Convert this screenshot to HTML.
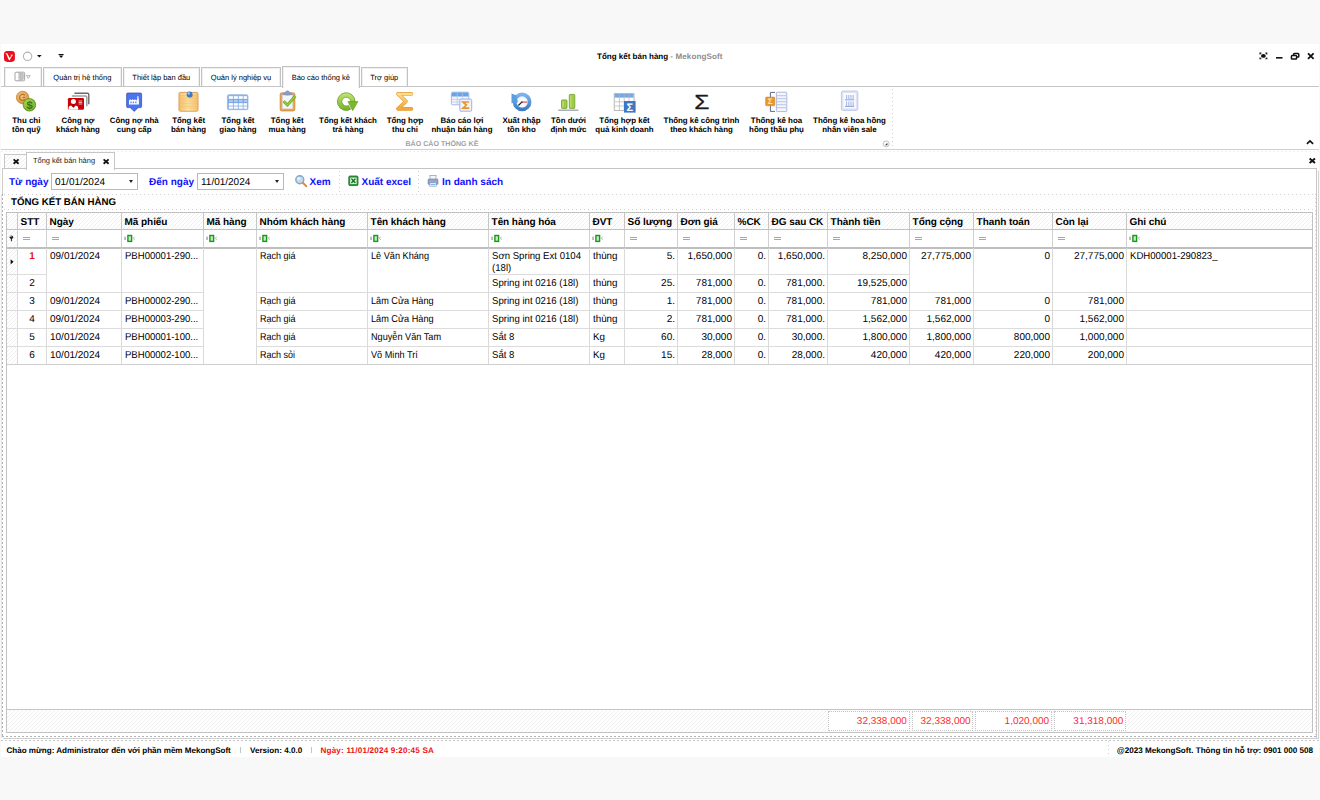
<!DOCTYPE html>
<html lang="vi"><head><meta charset="utf-8"><title>Tổng kết bán hàng - MekongSoft</title>
<style>
*{box-sizing:border-box;margin:0;padding:0}
html,body{width:1320px;height:800px;overflow:hidden;background:#f8f8f8;font-family:"Liberation Sans","DejaVu Sans",sans-serif;font-size:10px;color:#000;text-rendering:geometricPrecision}
.a{position:absolute}
.nw{white-space:nowrap}
#win{position:absolute;left:1px;top:44px;width:1318px;height:713px;background:#fff}
#title{position:absolute;left:597px;top:52px;font-size:8px;font-weight:bold;white-space:nowrap;line-height:10px}
#title span{color:#8c8c8c;letter-spacing:0.13px}
.rt{position:absolute;top:67.2px;height:19.8px;border:1px solid #c2c2c2;box-shadow:inset 1px 1px 0 #f0f0f0,inset -1px 0 0 #f0f0f0;border-bottom:none;background:#fff;font-size:7.5px;text-align:center;line-height:20.6px;white-space:nowrap;color:#000}
.rt.act{top:65.8px;height:22.2px;line-height:21.6px;z-index:3}
.hl{position:absolute;height:1px;background:#c9c9c9}
.vl{position:absolute;width:1px;background:#c9c9c9}
.rb{position:absolute;top:116px;text-align:center;font-weight:bold;font-size:7.9px;line-height:9px;white-space:nowrap;transform:translateX(-50%)}
.ic{position:absolute;z-index:4}
.hatch{background:repeating-linear-gradient(135deg,#fff 0,#fff 2.1px,#f0f0f0 2.2px,#f0f0f0 2.83px)}
.dth{position:absolute;height:1px;background:repeating-linear-gradient(90deg,#cfcfcf 0,#cfcfcf 1.5px,transparent 1.5px,transparent 4px)}
.dtv{position:absolute;width:1px;background:repeating-linear-gradient(180deg,#cfcfcf 0,#cfcfcf 1.5px,transparent 1.5px,transparent 4px)}
.blue{color:#1010ff;font-weight:bold;font-size:10px;white-space:nowrap;position:absolute;line-height:12px}
.dbox{position:absolute;top:173px;height:17px;border:1px solid #b9b9b9;background:#fff;font-size:10px;line-height:17px;padding-left:3px;white-space:nowrap}
.dbox i{position:absolute;right:4px;top:6px;width:0;height:0;border-left:2.5px solid transparent;border-right:2.5px solid transparent;border-top:3px solid #222}
.tot{position:absolute;top:711px;height:20px;border:1px dotted #c4c4c4;background:#fff;color:#ff2a2a;font-size:10px;line-height:20.6px;text-align:right;padding-right:1.6px}
.sb{position:absolute;top:745.7px;font-weight:bold;font-size:8.1px;line-height:10px;white-space:nowrap}
</style></head>
<body>
<div id="win"></div>
<svg class="ic" style="left:3.8px;top:50.8px" width="12" height="12" viewBox="0 0 12 12" ><rect x="0" y="0" width="10.9" height="10.9" rx="3.3" fill="#e8101c"/><path d="M1.3 2 L3.2 2.2 L5.7 7 L7.4 4.4 L6.6 4.2 L6.6 3.7 L9 3.7 L9 4.2 L8.3 4.4 L5.6 9.2 L5 9.2 L2.2 3 Z" fill="#fff"/></svg>
<svg class="ic" style="left:21px;top:50px" width="45" height="12" viewBox="0 0 45 12" ><circle cx="6.6" cy="6.3" r="4.2" fill="#fff" stroke="#b4b4b4" stroke-width="1.1"/><path d="M16 4.9 L20.6 4.9 L18.3 7.5 Z" fill="#111"/><path d="M37.6 4 H42.6 V4.9 H37.6 Z M37.8 5.6 L42.4 5.6 L40.1 8.1 Z" fill="#111"/></svg>
<div id="title">Tổng kết bán hàng <span>- MekongSoft</span></div>
<svg class="ic" style="left:1257px;top:50px" width="60" height="12" viewBox="0 0 60 12" ><g fill="none" stroke="#111" stroke-width="1.1"><path d="M3 4.4 V3.1 H4.4 M8.4 3.1 H9.8 V4.4 M9.8 7.4 V8.7 H8.4 M4.4 8.7 H3 V7.4"/></g><ellipse cx="6.4" cy="5.9" rx="2.4" ry="1.9" fill="#111"/><rect x="19" y="7" width="6.5" height="1.6" fill="#111"/><g fill="none" stroke="#111" stroke-width="1.5"><rect x="36.6" y="3.6" width="5.2" height="3.4" rx="0.8"/><rect x="34.4" y="5.6" width="5.2" height="3.4" rx="0.8" fill="#fff"/></g><path d="M51 3.4 L56.6 8.8 M56.6 3.4 L51 8.8" stroke="#111" stroke-width="1.8" fill="none"/></svg>
<div class="rt" style="left:3.5px;width:38.7px"></div>
<div class="rt" style="left:42.8px;width:79.1px">Quản trị hệ thống</div>
<div class="rt" style="left:122.6px;width:77.4px">Thiết lập ban đầu</div>
<div class="rt" style="left:200.8px;width:80.5px">Quản lý nghiệp vụ</div>
<div class="rt act" style="left:281.7px;width:78.3px">Báo cáo thống kê</div>
<div class="rt" style="left:360.5px;width:47.5px">Trợ giúp</div>
<svg class="ic" style="left:14px;top:71px" width="20" height="12" viewBox="0 0 20 12" ><rect x="1" y="1.2" width="9.6" height="8.6" rx="1" fill="#fff" stroke="#9a9a9a" stroke-width="0.9"/><rect x="6" y="2.6" width="3.2" height="5.8" fill="#c4c4c4" stroke="#9c9c9c" stroke-width="0.5"/><path d="M5 1.2 V9.8" stroke="#9a9a9a" stroke-width="0.8"/><path d="M12.4 4.6 L16.2 4.6 L14.3 7.4 Z" fill="#fff" stroke="#999" stroke-width="0.7"/></svg>
<div class="hl" style="left:1px;top:86px;width:1318px;background:#c6c6c6;height:1.3px"></div>
<div class="hl" style="left:1px;top:148.6px;width:1318px;background:#cfcfcf"></div>
<div class="dth" style="left:1px;top:151px;width:1318px;opacity:.3"></div>
<div class="rb" style="left:26.3px">Thu chi<br>tồn quỹ</div>
<div class="rb" style="left:78px">Công nợ<br>khách hàng</div>
<div class="rb" style="left:134.2px">Công nợ nhà<br>cung cấp</div>
<div class="rb" style="left:188.6px">Tổng kết<br>bán hàng</div>
<div class="rb" style="left:238px">Tổng kết<br>giao hàng</div>
<div class="rb" style="left:287.2px">Tổng kết<br>mua hàng</div>
<div class="rb" style="left:348px">Tổng kết khách<br>trả hàng</div>
<div class="rb" style="left:405px">Tổng hợp<br>thu chi</div>
<div class="rb" style="left:462px">Báo cáo lợi<br>nhuận bán hàng</div>
<div class="rb" style="left:521.5px">Xuất nhập<br>tồn kho</div>
<div class="rb" style="left:568.5px">Tồn dưới<br>định mức</div>
<div class="rb" style="left:624.5px">Tổng hợp kết<br>quả kinh doanh</div>
<div class="rb" style="left:701.5px">Thống kê công trình<br>theo khách hàng</div>
<div class="rb" style="left:776.5px">Thống kê hoa<br>hồng thầu phụ</div>
<div class="rb" style="left:849.5px">Thống kê hoa hồng<br>nhân viên sale</div>
<div class="a nw" style="left:405.5px;top:140px;font-size:7.1px;font-weight:bold;color:#a2a2a2;line-height:9px">BÁO CÁO THỐNG KÊ</div>
<div class="dtv" style="left:892px;top:89px;height:60px;"></div>
<svg class="ic" style="left:882px;top:140px" width="8" height="8" viewBox="0 0 8 8" ><circle cx="4.2" cy="3.9" r="3" fill="#fff" stroke="#999" stroke-width="0.6"/><path d="M5.4 2.8 L5.4 5.2 L3 5.2 Z" fill="#333"/></svg>
<svg class="ic" style="left:1305px;top:138px" width="10" height="8" viewBox="0 0 10 8" ><path d="M1.9 5.8 L5 2.9 L8.1 5.8" fill="none" stroke="#111" stroke-width="1.7"/></svg>
<svg class="ic" style="left:1308px;top:156px" width="9" height="9" viewBox="0 0 9 9" ><path d="M1.6 2.5 L7 7 M7 2.5 L1.6 7" stroke="#111" stroke-width="1.9" fill="none"/></svg>
<svg width="0" height="0" style="position:absolute"><defs><radialGradient id="gOr" cx="40%" cy="35%" r="70%"><stop offset="0" stop-color="#f8d098"/><stop offset="1" stop-color="#d08428"/></radialGradient><radialGradient id="gGr" cx="40%" cy="35%" r="70%"><stop offset="0" stop-color="#b4dc5a"/><stop offset="1" stop-color="#5c9a1c"/></radialGradient><linearGradient id="gSig" x1="0" y1="0" x2="0" y2="1"><stop offset="0" stop-color="#fde08c"/><stop offset="1" stop-color="#f0a838"/></linearGradient><linearGradient id="gNote" x1="0" y1="0" x2="1" y2="0"><stop offset="0" stop-color="#f5c474"/><stop offset="0.5" stop-color="#fdeaae"/><stop offset="1" stop-color="#f5c474"/></linearGradient><linearGradient id="gGrn" x1="0" y1="0" x2="0" y2="1"><stop offset="0" stop-color="#c4e674"/><stop offset="1" stop-color="#74b024"/></linearGradient><linearGradient id="gBlu" x1="0" y1="0" x2="0" y2="1"><stop offset="0" stop-color="#7cb4ec"/><stop offset="1" stop-color="#3c7cc8"/></linearGradient></defs></svg>
<svg class="ic" style="left:15px;top:90px" width="23" height="23" viewBox="0 0 23 23" ><circle cx="7.6" cy="7.5" r="6.2" fill="url(#gOr)" stroke="#cc8c3c" stroke-width="0.9"/><circle cx="7.6" cy="7.5" r="4.3" fill="none" stroke="#e8b068" stroke-width="0.7"/><path d="M9.8 5.4 A3 3 0 1 0 9.9 9.4 M7.6 7.4 H10" fill="none" stroke="#b87428" stroke-width="1.3"/><circle cx="14.4" cy="14.8" r="6.3" fill="url(#gGr)" stroke="#5a941c" stroke-width="0.8"/><circle cx="14.4" cy="14.8" r="4.9" fill="none" stroke="#a4d458" stroke-width="0.6"/><text x="14.5" y="18.7" font-family="Liberation Sans,sans-serif" font-weight="bold" font-size="11" text-anchor="middle" fill="#3a7410">$</text></svg>
<svg class="ic" style="left:66px;top:91px" width="25" height="21" viewBox="0 0 25 21" ><path d="M8.4 2.2 H21.6 Q22.8 2.2 22.8 3.4 V13.2" fill="none" stroke="#6a6a6a" stroke-width="1.4"/><path d="M5.8 4.9 H19.4 Q20.8 4.9 20.8 6.2 V15.2" fill="none" stroke="#9aa2a2" stroke-width="1.5"/><rect x="1.9" y="6.9" width="16.1" height="11.9" rx="1.3" fill="#c80008"/><circle cx="7.4" cy="10.5" r="2.5" fill="#fff"/><path d="M2.6 18.8 V16.8 Q2.6 14.6 5 14.4 L7.4 16.8 L9.8 14.4 Q12.2 14.6 12.2 16.8 V18.8 Z" fill="#fff"/><path d="M6.9 13 H7.9 L8.1 15.6 L7.4 16.6 L6.7 15.6 Z" fill="#701818"/><path d="M12.6 10 H16.2 M12.6 11.5 H16.2 M12.6 13 H16.2" stroke="#f8d8d8" stroke-width="0.8"/></svg>
<svg class="ic" style="left:125px;top:92px" width="19" height="20" viewBox="0 0 19 20" ><path d="M2.8 1 H15.4 Q16.6 1 16.6 2.2 V14.4 Q16.6 15.6 15.4 15.6 H13.2 L9.2 19.4 L5.2 15.6 H2.8 Q1.6 15.6 1.6 14.4 V2.2 Q1.6 1 2.8 1 Z" fill="#4c74f0" stroke="#34489c" stroke-width="0.7"/><path d="M4 12.6 V8.4 L5.2 7.2 L6.4 8.2 L7.6 7.2 L8.8 8.2 L10 7.2 L11.2 8.2 H12 L12.5 4 H13.3 L13.9 8.2 V12.6 Z" fill="#fff"/><path d="M5.3 9.6 H6.7 V11.3 H5.3 Z M7.7 9.6 H9.1 V11.3 H7.7 Z M10.1 9.6 H11.5 V11.3 H10.1 Z" fill="#6c8cf0"/></svg>
<svg class="ic" style="left:177px;top:90px" width="23" height="23" viewBox="0 0 23 23" ><rect x="2" y="2.4" width="19" height="18.8" rx="1.2" fill="url(#gNote)" stroke="#dc9c58" stroke-width="1"/><path d="M3 5.4 H20 M3 7 H20 M3 8.6 H20 M3 10.2 H20 M3 11.8 H20 M3 13.4 H20 M3 15 H20 M3 16.6 H20 M3 18.2 H20" stroke="#f0b25c" stroke-width="0.5"/><ellipse cx="13.4" cy="6.2" rx="2.6" ry="1.6" fill="#c89040" opacity=".45"/><circle cx="12.6" cy="4.4" r="3" fill="#3a78c4"/><circle cx="11.8" cy="3.4" r="1.2" fill="#a4c8f0"/></svg>
<svg class="ic" style="left:226px;top:93px" width="24" height="18" viewBox="0 0 24 18" ><rect x="1.4" y="1.7" width="20.6" height="15" rx="1.6" fill="#8cb2e8" stroke="#94b6e6" stroke-width="0.8"/><rect x="2.2" y="6.2" width="19" height="3.6" fill="#6c9ce0"/><rect x="2.9" y="3.2" width="4" height="2.6" fill="#fff"/><rect x="7.8" y="3.2" width="4" height="2.6" fill="#fff"/><rect x="12.7" y="3.2" width="4" height="2.6" fill="#fff"/><rect x="17.6" y="3.2" width="3.4" height="2.6" fill="#fff"/><rect x="2.9" y="6.7" width="4" height="2.6" fill="#a8c8f0"/><rect x="7.8" y="6.7" width="4" height="2.6" fill="#a8c8f0"/><rect x="12.7" y="6.7" width="4" height="2.6" fill="#a8c8f0"/><rect x="17.6" y="6.7" width="3.4" height="2.6" fill="#a8c8f0"/><rect x="2.9" y="10.2" width="4" height="2.4" fill="#fff"/><rect x="7.8" y="10.2" width="4" height="2.4" fill="#fff"/><rect x="12.7" y="10.2" width="4" height="2.4" fill="#fff"/><rect x="17.6" y="10.2" width="3.4" height="2.4" fill="#fff"/><rect x="2.9" y="13.5" width="4" height="2.2" fill="#fff"/><rect x="7.8" y="13.5" width="4" height="2.2" fill="#fff"/><rect x="12.7" y="13.5" width="4" height="2.2" fill="#fff"/><rect x="17.6" y="13.5" width="3.4" height="2.2" fill="#fff"/></svg>
<svg class="ic" style="left:278px;top:90px" width="20" height="23" viewBox="0 0 20 23" ><rect x="2.2" y="2.9" width="14.6" height="18" rx="1.4" fill="#eaa850" stroke="#d08a34" stroke-width="0.9"/><rect x="4.4" y="4.4" width="10.2" height="14.4" fill="#f2f5fb" stroke="#d0d6e4" stroke-width="0.4"/><path d="M4.6 4.6 Q4.8 2.6 7.2 2.4 Q8 0.8 9.5 0.8 Q11 0.8 11.8 2.4 Q14.2 2.6 14.4 4.6 Q9.5 5.8 4.6 4.6 Z" fill="#8c9cc0" stroke="#7484ac" stroke-width="0.5"/><path d="M5.6 11.2 L9.4 15 L17.4 6" fill="none" stroke="#68a422" stroke-width="2.7" stroke-linejoin="miter"/><path d="M5.6 11.2 L9.4 15 L17.4 6" fill="none" stroke="#94d03c" stroke-width="1.5" stroke-linejoin="miter"/></svg>
<svg class="ic" style="left:336px;top:91px" width="24" height="21" viewBox="0 0 24 21" ><path d="M19.05 10.6 A8.85 8.85 0 1 0 14.6 18.26 L12.4 14.4 A4.4 4.4 0 1 1 14.6 10.6 Z" fill="url(#gGrn)" stroke="#5e9a1e" stroke-width="0.7"/><path d="M11.9 10.6 H21.9 L16.7 19.7 Z" fill="#7cb82c" stroke="#5e9a1e" stroke-width="0.6"/></svg>
<svg class="ic" style="left:395px;top:91px" width="20" height="21" viewBox="0 0 20 21" ><path d="M16.5 2.9 H2.9 L11 10.4 L2.9 17.9 H16.5" fill="none" stroke="#e49a3a" stroke-width="3.6" stroke-linejoin="round" stroke-linecap="round"/><path d="M16.5 2.9 H2.9 L11 10.4 L2.9 17.9 H16.5" fill="none" stroke="url(#gSig)" stroke-width="2.5" stroke-linejoin="round" stroke-linecap="round"/></svg>
<svg class="ic" style="left:450px;top:91px" width="24" height="22" viewBox="0 0 24 22" ><rect x="1.4" y="1.2" width="17.4" height="12.6" rx="1.2" fill="#f2f5fc" stroke="#90a8dc" stroke-width="0.8"/><path d="M1.8 2.4 Q1.8 1.6 2.6 1.6 H17.6 Q18.4 1.6 18.4 2.4 V5.6 H1.8 Z" fill="#68a4e4"/><path d="M1.8 8.4 H18.4 M1.8 11 H18.4 M7.2 1.8 V13.4 M12.6 1.8 V13.4" stroke="#b4c4e8" stroke-width="0.7"/><rect x="9.8" y="8.1" width="11.9" height="12.1" rx="1.2" fill="#eef2fb" stroke="#a4b0dc" stroke-width="1"/><path d="M19.2 11 H13 L16.4 14.1 L13 17.2 H19.2" fill="none" stroke="#e8962c" stroke-width="1.7" stroke-linejoin="miter"/></svg>
<svg class="ic" style="left:510px;top:91px" width="24" height="22" viewBox="0 0 24 22" ><circle cx="12.1" cy="10.9" r="7.5" fill="#f0f5fb" stroke="url(#gBlu)" stroke-width="3.7"/><path d="M1.5 2.4 V12.3 L10.6 11.6 Q5 9 6.6 4.6 Z" fill="#5a9ee0"/><circle cx="12.1" cy="11.6" r="4.6" fill="#f6f9fd"/><path d="M11.8 11.1 L8.4 14.5" stroke="#222" stroke-width="1.2"/><path d="M12.4 11.1 H17.2" stroke="#d04040" stroke-width="1.1"/><circle cx="11.9" cy="11.1" r="0.9" fill="#333"/></svg>
<svg class="ic" style="left:557px;top:92px" width="23" height="20" viewBox="0 0 23 20" ><rect x="4.5" y="7.9" width="5.5" height="8.5" rx="0.7" fill="#a0cc48" stroke="#6e9e2a" stroke-width="0.8"/><rect x="12.3" y="2.4" width="5.5" height="14" rx="0.7" fill="#a0cc48" stroke="#6e9e2a" stroke-width="0.8"/><path d="M6 9 V15.6 M13.8 3.6 V15.6" stroke="#b8dc68" stroke-width="1.4"/><rect x="1.2" y="17.7" width="20.2" height="0.9" fill="#74749a"/></svg>
<svg class="ic" style="left:613px;top:92px" width="24" height="22" viewBox="0 0 24 22" ><rect x="1.2" y="1.6" width="19.8" height="16.8" fill="#fff" stroke="#a8a8a8" stroke-width="0.8"/><rect x="1.6" y="2" width="19" height="3.6" fill="#78a8e4"/><path d="M1.6 9.8 H20.6 M1.6 14 H20.6 M6.4 2 V18 M11.2 2 V18 M16 2 V18" stroke="#b4b4b4" stroke-width="0.7"/><rect x="11" y="9" width="11.6" height="11.6" fill="#3c78c4"/><text x="16.8" y="18.6" font-family="Liberation Sans,sans-serif" font-weight="bold" font-size="11" text-anchor="middle" fill="#fff">Σ</text></svg>
<svg class="ic" style="left:693px;top:92px" width="18" height="19" viewBox="0 0 18 19" ><text x="0" y="16.7" font-family="Liberation Sans,sans-serif" font-size="20.4" text-anchor="middle" fill="#1a1a1a" stroke="#1a1a1a" stroke-width="0.3" transform="translate(8.7,0) scale(1.2,1)">Σ</text></svg>
<svg class="ic" style="left:764px;top:91px" width="25" height="22" viewBox="0 0 25 22" ><path d="M11 1.4 H6.4 V20.4 H11" fill="none" stroke="#4c587c" stroke-width="0.9"/><rect x="12.4" y="1.2" width="10.4" height="19.4" rx="0.8" fill="#f2f5fc" stroke="#9aa8d4" stroke-width="0.8"/><path d="M13 4.6 H22.2 M13 7.6 H22.2 M13 10.6 H22.2 M13 13.6 H22.2 M13 16.6 H22.2" stroke="#c4cee8" stroke-width="1.2"/><rect x="1.6" y="6" width="9.2" height="8.8" rx="0.8" fill="#e8962c" stroke="#d08020" stroke-width="0.5"/><text x="6.2" y="13.4" font-family="Liberation Sans,sans-serif" font-weight="bold" font-size="8" text-anchor="middle" fill="#fbe4b8">Σ</text></svg>
<svg class="ic" style="left:840px;top:90px" width="20" height="22" viewBox="0 0 20 22" ><rect x="1.4" y="1" width="16.4" height="19.4" rx="1.4" fill="#dfe3f4" stroke="#b8c0e4" stroke-width="0.8"/><rect x="3.4" y="3" width="12.4" height="15.4" fill="#fafbfe"/><path d="M5 9.8 H14.2 M5 16.4 H14.2" stroke="#6c8cd4" stroke-width="0.8"/><path d="M6.6 5 V9.4 M8.8 5 V9.4 M11 5 V9.4 M13.2 5 V9.4 M6.6 11.6 V16 M8.8 11.6 V16 M11 11.6 V16 M13.2 11.6 V16" stroke="#a4b8e8" stroke-width="1.1"/></svg>
<div class="a hatch" style="left:4px;top:154px;width:23px;height:15px;border:1px solid #c6c6c6;border-bottom:none"></div>
<svg class="ic" style="left:12px;top:157px" width="9" height="9" viewBox="0 0 9 9" ><path d="M1.6 2.4 L6.6 6.8 M6.6 2.4 L1.6 6.8" stroke="#111" stroke-width="1.8" fill="none"/></svg>
<div class="a" style="left:26px;top:152px;width:89px;height:18px;border:1px solid #c6c6c6;border-bottom:none;background:#fff;z-index:2"></div>
<div class="a nw" style="left:33px;top:156px;font-size:7.45px;line-height:10px;z-index:3;color:#222">Tổng kết bán hàng</div>
<svg class="ic" style="left:102px;top:157px" width="9" height="9" viewBox="0 0 9 9" ><path d="M1.6 2.4 L6.6 6.8 M6.6 2.4 L1.6 6.8" stroke="#111" stroke-width="1.8" fill="none"/></svg>
<div class="hl" style="left:2px;top:168px;width:1315px;background:#c4c4c4"></div>
<div class="vl" style="left:1.5px;top:168px;height:26px;background:#cccccc"></div>
<div class="vl" style="left:1px;top:194px;height:544px;background:#e4e4e4"></div>
<div class="a" style="left:1.8px;top:194px;width:1px;height:543px;background:repeating-linear-gradient(180deg,#b0b0b0 0,#b0b0b0 2.4px,transparent 2.4px,transparent 4px)"></div>
<div class="vl" style="left:1316.2px;top:168px;height:570px;background:#c6c6c6"></div>
<div class="vl" style="left:1318px;top:171px;height:567px;background:#d4d4d4"></div>
<div class="dtv" style="left:1315.2px;top:194px;height:542px"></div>
<div class="blue" style="left:9px;top:177.2px">Từ ngày</div>
<div class="dbox" style="left:51px;width:87px">01/01/2024<i></i></div>
<div class="blue" style="left:149px;top:177.2px">Đến ngày</div>
<div class="dbox" style="left:197px;width:87px">11/01/2024<i></i></div>
<svg class="ic" style="left:294px;top:174px" width="14" height="14" viewBox="0 0 14 14" ><circle cx="5.8" cy="5.8" r="4" fill="#bcdcf6" stroke="#8ca4c0" stroke-width="1.4"/><circle cx="4.8" cy="4.6" r="1.6" fill="#e4f2fc"/><path d="M8.8 8.8 L12.4 12.2" stroke="#d88c4c" stroke-width="1.9" stroke-linecap="round"/></svg>
<div class="blue" style="left:309.5px;top:177.2px">Xem</div>
<div class="dtv" style="left:339px;top:171px;height:21px"></div>
<svg class="ic" style="left:348px;top:175px" width="11" height="12" viewBox="0 0 11 12" ><rect x="0.8" y="1" width="9.2" height="9.6" rx="1.2" fill="#2c9c3c" stroke="#146c20" stroke-width="0.8"/><rect x="2.2" y="2.6" width="6.4" height="6.4" fill="#e4f4e4"/><path d="M3.4 3.6 L7.4 8 M7.4 3.6 L3.4 8" stroke="#0c6c1c" stroke-width="1.4"/></svg>
<div class="blue" style="left:361.5px;top:177.2px">Xuất excel</div>
<div class="dtv" style="left:418px;top:171px;height:21px"></div>
<svg class="ic" style="left:427px;top:174px" width="12" height="14" viewBox="0 0 12 14" ><rect x="3" y="1.4" width="6" height="4.4" fill="#f4f8fc" stroke="#8898b8" stroke-width="0.7"/><rect x="1" y="5" width="10" height="5.4" rx="1" fill="#94a6cc" stroke="#6c7ca4" stroke-width="0.6"/><rect x="2.8" y="8.6" width="6.4" height="3.6" fill="#e8f0fc" stroke="#7c90b8" stroke-width="0.6"/><path d="M3.6 10.4 H8.4" stroke="#58a0e0" stroke-width="0.8"/></svg>
<div class="blue" style="left:442px;top:177.2px">In danh sách</div>
<div class="a hatch" style="left:5px;top:194px;width:1310px;height:15px;opacity:.35"></div>
<div class="dth" style="left:4px;top:193.5px;width:1311px"></div>
<div class="dth" style="left:4px;top:208.5px;width:1311px"></div>
<div class="a nw" style="left:11px;top:196.8px;font-size:9.7px;font-weight:bold;line-height:12px">TỔNG KẾT BÁN HÀNG</div>
<div class="a" style="left:6px;top:212px;width:1307px;height:521px;border:1px solid #c2c2c2;background:#fff"></div>
<div class="a hatch" style="left:7px;top:213px;width:1305px;height:16px"></div>
<div class="a hatch" style="left:7px;top:248px;width:10px;height:116px"></div>
<div class="a hatch" style="left:7px;top:230px;width:10px;height:17px"></div>
<div class="a hatch" style="left:7px;top:710px;width:1305px;height:22px"></div>
<div class="hl" style="left:7px;top:709px;width:1305px;background:#c6c6c6"></div>
<div class="hl" style="left:7px;top:229px;width:1305px;background:#c2c2c2"></div>
<div class="hl" style="left:7px;top:247px;width:1305px;height:1.8px;background:#bebebe"></div>
<div class="vl" style="left:17px;top:213px;height:16px;background:#c6c6c6"></div>
<div class="vl" style="left:17px;top:230px;height:17px;background:#d0d0d0"></div>
<div class="vl" style="left:17px;top:248px;height:116px;background:#dadada"></div>
<div class="vl" style="left:46px;top:213px;height:16px;background:#c6c6c6"></div>
<div class="vl" style="left:46px;top:230px;height:17px;background:#d0d0d0"></div>
<div class="vl" style="left:46px;top:248px;height:116px;background:#dadada"></div>
<div class="vl" style="left:121px;top:213px;height:16px;background:#c6c6c6"></div>
<div class="vl" style="left:121px;top:230px;height:17px;background:#d0d0d0"></div>
<div class="vl" style="left:121px;top:248px;height:116px;background:#dadada"></div>
<div class="vl" style="left:203px;top:213px;height:16px;background:#c6c6c6"></div>
<div class="vl" style="left:203px;top:230px;height:17px;background:#d0d0d0"></div>
<div class="vl" style="left:203px;top:248px;height:116px;background:#dadada"></div>
<div class="vl" style="left:256px;top:213px;height:16px;background:#c6c6c6"></div>
<div class="vl" style="left:256px;top:230px;height:17px;background:#d0d0d0"></div>
<div class="vl" style="left:256px;top:248px;height:116px;background:#dadada"></div>
<div class="vl" style="left:367px;top:213px;height:16px;background:#c6c6c6"></div>
<div class="vl" style="left:367px;top:230px;height:17px;background:#d0d0d0"></div>
<div class="vl" style="left:367px;top:248px;height:116px;background:#dadada"></div>
<div class="vl" style="left:488px;top:213px;height:16px;background:#c6c6c6"></div>
<div class="vl" style="left:488px;top:230px;height:17px;background:#d0d0d0"></div>
<div class="vl" style="left:488px;top:248px;height:116px;background:#dadada"></div>
<div class="vl" style="left:589px;top:213px;height:16px;background:#c6c6c6"></div>
<div class="vl" style="left:589px;top:230px;height:17px;background:#d0d0d0"></div>
<div class="vl" style="left:589px;top:248px;height:116px;background:#dadada"></div>
<div class="vl" style="left:624px;top:213px;height:16px;background:#c6c6c6"></div>
<div class="vl" style="left:624px;top:230px;height:17px;background:#d0d0d0"></div>
<div class="vl" style="left:624px;top:248px;height:116px;background:#dadada"></div>
<div class="vl" style="left:677px;top:213px;height:16px;background:#c6c6c6"></div>
<div class="vl" style="left:677px;top:230px;height:17px;background:#d0d0d0"></div>
<div class="vl" style="left:677px;top:248px;height:116px;background:#dadada"></div>
<div class="vl" style="left:734px;top:213px;height:16px;background:#c6c6c6"></div>
<div class="vl" style="left:734px;top:230px;height:17px;background:#d0d0d0"></div>
<div class="vl" style="left:734px;top:248px;height:116px;background:#dadada"></div>
<div class="vl" style="left:768px;top:213px;height:16px;background:#c6c6c6"></div>
<div class="vl" style="left:768px;top:230px;height:17px;background:#d0d0d0"></div>
<div class="vl" style="left:768px;top:248px;height:116px;background:#dadada"></div>
<div class="vl" style="left:827px;top:213px;height:16px;background:#c6c6c6"></div>
<div class="vl" style="left:827px;top:230px;height:17px;background:#d0d0d0"></div>
<div class="vl" style="left:827px;top:248px;height:116px;background:#dadada"></div>
<div class="vl" style="left:909px;top:213px;height:16px;background:#c6c6c6"></div>
<div class="vl" style="left:909px;top:230px;height:17px;background:#d0d0d0"></div>
<div class="vl" style="left:909px;top:248px;height:116px;background:#dadada"></div>
<div class="vl" style="left:973px;top:213px;height:16px;background:#c6c6c6"></div>
<div class="vl" style="left:973px;top:230px;height:17px;background:#d0d0d0"></div>
<div class="vl" style="left:973px;top:248px;height:116px;background:#dadada"></div>
<div class="vl" style="left:1052px;top:213px;height:16px;background:#c6c6c6"></div>
<div class="vl" style="left:1052px;top:230px;height:17px;background:#d0d0d0"></div>
<div class="vl" style="left:1052px;top:248px;height:116px;background:#dadada"></div>
<div class="vl" style="left:1126px;top:213px;height:16px;background:#c6c6c6"></div>
<div class="vl" style="left:1126px;top:230px;height:17px;background:#d0d0d0"></div>
<div class="vl" style="left:1126px;top:248px;height:116px;background:#dadada"></div>
<div class="hl" style="left:7px;top:274.4px;width:39px;background:#dcdcdc"></div>
<div class="hl" style="left:489px;top:274.4px;width:420px;background:#dcdcdc"></div>
<div class="hl" style="left:7px;top:292px;width:196px;background:#dcdcdc"></div>
<div class="hl" style="left:257px;top:292px;width:1055px;background:#dcdcdc"></div>
<div class="hl" style="left:7px;top:310px;width:196px;background:#dcdcdc"></div>
<div class="hl" style="left:257px;top:310px;width:1055px;background:#dcdcdc"></div>
<div class="hl" style="left:7px;top:328px;width:196px;background:#dcdcdc"></div>
<div class="hl" style="left:257px;top:328px;width:1055px;background:#dcdcdc"></div>
<div class="hl" style="left:7px;top:346px;width:196px;background:#dcdcdc"></div>
<div class="hl" style="left:257px;top:346px;width:1055px;background:#dcdcdc"></div>
<div class="hl" style="left:7px;top:364px;width:1305px;background:#cfcfcf"></div>
<div class="a nw" style="left:20.6px;top:216.7px;font-weight:bold;font-size:10px;letter-spacing:-0.07px;line-height:12px">STT</div>
<div class="a nw" style="left:49.6px;top:216.7px;font-weight:bold;font-size:10px;letter-spacing:-0.07px;line-height:12px">Ngày</div>
<div class="a nw" style="left:124.6px;top:216.7px;font-weight:bold;font-size:10px;letter-spacing:-0.07px;line-height:12px">Mã phiếu</div>
<div class="a nw" style="left:206.6px;top:216.7px;font-weight:bold;font-size:10px;letter-spacing:-0.07px;line-height:12px">Mã hàng</div>
<div class="a nw" style="left:259.6px;top:216.7px;font-weight:bold;font-size:10px;letter-spacing:-0.07px;line-height:12px">Nhóm khách hàng</div>
<div class="a nw" style="left:370.6px;top:216.7px;font-weight:bold;font-size:10px;letter-spacing:-0.07px;line-height:12px">Tên khách hàng</div>
<div class="a nw" style="left:491.6px;top:216.7px;font-weight:bold;font-size:10px;letter-spacing:-0.07px;line-height:12px">Tên hàng hóa</div>
<div class="a nw" style="left:592.6px;top:216.7px;font-weight:bold;font-size:10px;letter-spacing:-0.07px;line-height:12px">ĐVT</div>
<div class="a nw" style="left:627.6px;top:216.7px;font-weight:bold;font-size:10px;letter-spacing:-0.07px;line-height:12px">Số lượng</div>
<div class="a nw" style="left:680.6px;top:216.7px;font-weight:bold;font-size:10px;letter-spacing:-0.07px;line-height:12px">Đơn giá</div>
<div class="a nw" style="left:737.6px;top:216.7px;font-weight:bold;font-size:10px;letter-spacing:-0.07px;line-height:12px">%CK</div>
<div class="a nw" style="left:771.6px;top:216.7px;font-weight:bold;font-size:10px;letter-spacing:-0.07px;line-height:12px">ĐG sau CK</div>
<div class="a nw" style="left:830.6px;top:216.7px;font-weight:bold;font-size:10px;letter-spacing:-0.07px;line-height:12px">Thành tiền</div>
<div class="a nw" style="left:912.6px;top:216.7px;font-weight:bold;font-size:10px;letter-spacing:-0.07px;line-height:12px">Tổng cộng</div>
<div class="a nw" style="left:976.6px;top:216.7px;font-weight:bold;font-size:10px;letter-spacing:-0.07px;line-height:12px">Thanh toán</div>
<div class="a nw" style="left:1055.6px;top:216.7px;font-weight:bold;font-size:10px;letter-spacing:-0.07px;line-height:12px">Còn lại</div>
<div class="a nw" style="left:1129.6px;top:216.7px;font-weight:bold;font-size:10px;letter-spacing:-0.07px;line-height:12px">Ghi chú</div>
<svg class="ic" style="left:8px;top:234px" width="8" height="9" viewBox="0 0 8 9" ><circle cx="3.4" cy="3.2" r="1.8" fill="#222"/><path d="M3.4 4 V7.2" stroke="#222" stroke-width="1"/><circle cx="2.9" cy="2.5" r="0.6" fill="#fff"/></svg>
<div class="a" style="left:23.3px;top:237px;width:6.4px;height:3.4px;border-top:1.2px solid #a6a6a6;border-bottom:1.2px solid #a6a6a6"></div>
<div class="a" style="left:52.3px;top:237px;width:6.4px;height:3.4px;border-top:1.2px solid #a6a6a6;border-bottom:1.2px solid #a6a6a6"></div>
<svg class="ic" style="left:124px;top:234px" width="12" height="9" viewBox="0 0 12 9" ><rect x="0.4" y="2.6" width="1.3" height="3.4" fill="#9a9a9a"/><rect x="3.9" y="1.5" width="3.7" height="5.9" fill="#c4ecc4" stroke="#149a14" stroke-width="1.4"/><path d="M10.6 2.8 L9.4 4.3 L10.6 5.8" fill="none" stroke="#9a9a9a" stroke-width="0.8"/></svg>
<svg class="ic" style="left:206px;top:234px" width="12" height="9" viewBox="0 0 12 9" ><rect x="0.4" y="2.6" width="1.3" height="3.4" fill="#9a9a9a"/><rect x="3.9" y="1.5" width="3.7" height="5.9" fill="#c4ecc4" stroke="#149a14" stroke-width="1.4"/><path d="M10.6 2.8 L9.4 4.3 L10.6 5.8" fill="none" stroke="#9a9a9a" stroke-width="0.8"/></svg>
<svg class="ic" style="left:259px;top:234px" width="12" height="9" viewBox="0 0 12 9" ><rect x="0.4" y="2.6" width="1.3" height="3.4" fill="#9a9a9a"/><rect x="3.9" y="1.5" width="3.7" height="5.9" fill="#c4ecc4" stroke="#149a14" stroke-width="1.4"/><path d="M10.6 2.8 L9.4 4.3 L10.6 5.8" fill="none" stroke="#9a9a9a" stroke-width="0.8"/></svg>
<svg class="ic" style="left:370px;top:234px" width="12" height="9" viewBox="0 0 12 9" ><rect x="0.4" y="2.6" width="1.3" height="3.4" fill="#9a9a9a"/><rect x="3.9" y="1.5" width="3.7" height="5.9" fill="#c4ecc4" stroke="#149a14" stroke-width="1.4"/><path d="M10.6 2.8 L9.4 4.3 L10.6 5.8" fill="none" stroke="#9a9a9a" stroke-width="0.8"/></svg>
<svg class="ic" style="left:491px;top:234px" width="12" height="9" viewBox="0 0 12 9" ><rect x="0.4" y="2.6" width="1.3" height="3.4" fill="#9a9a9a"/><rect x="3.9" y="1.5" width="3.7" height="5.9" fill="#c4ecc4" stroke="#149a14" stroke-width="1.4"/><path d="M10.6 2.8 L9.4 4.3 L10.6 5.8" fill="none" stroke="#9a9a9a" stroke-width="0.8"/></svg>
<svg class="ic" style="left:592px;top:234px" width="12" height="9" viewBox="0 0 12 9" ><rect x="0.4" y="2.6" width="1.3" height="3.4" fill="#9a9a9a"/><rect x="3.9" y="1.5" width="3.7" height="5.9" fill="#c4ecc4" stroke="#149a14" stroke-width="1.4"/><path d="M10.6 2.8 L9.4 4.3 L10.6 5.8" fill="none" stroke="#9a9a9a" stroke-width="0.8"/></svg>
<div class="a" style="left:630.3px;top:237px;width:6.4px;height:3.4px;border-top:1.2px solid #a6a6a6;border-bottom:1.2px solid #a6a6a6"></div>
<div class="a" style="left:683.3px;top:237px;width:6.4px;height:3.4px;border-top:1.2px solid #a6a6a6;border-bottom:1.2px solid #a6a6a6"></div>
<div class="a" style="left:740.3px;top:237px;width:6.4px;height:3.4px;border-top:1.2px solid #a6a6a6;border-bottom:1.2px solid #a6a6a6"></div>
<div class="a" style="left:774.3px;top:237px;width:6.4px;height:3.4px;border-top:1.2px solid #a6a6a6;border-bottom:1.2px solid #a6a6a6"></div>
<div class="a" style="left:833.3px;top:237px;width:6.4px;height:3.4px;border-top:1.2px solid #a6a6a6;border-bottom:1.2px solid #a6a6a6"></div>
<div class="a" style="left:915.3px;top:237px;width:6.4px;height:3.4px;border-top:1.2px solid #a6a6a6;border-bottom:1.2px solid #a6a6a6"></div>
<div class="a" style="left:979.3px;top:237px;width:6.4px;height:3.4px;border-top:1.2px solid #a6a6a6;border-bottom:1.2px solid #a6a6a6"></div>
<div class="a" style="left:1058.3px;top:237px;width:6.4px;height:3.4px;border-top:1.2px solid #a6a6a6;border-bottom:1.2px solid #a6a6a6"></div>
<svg class="ic" style="left:1129px;top:234px" width="12" height="9" viewBox="0 0 12 9" ><rect x="0.4" y="2.6" width="1.3" height="3.4" fill="#9a9a9a"/><rect x="3.9" y="1.5" width="3.7" height="5.9" fill="#c4ecc4" stroke="#149a14" stroke-width="1.4"/><path d="M10.6 2.8 L9.4 4.3 L10.6 5.8" fill="none" stroke="#9a9a9a" stroke-width="0.8"/></svg>
<svg class="ic" style="left:8.5px;top:258px" width="6" height="8" viewBox="0 0 6 8" ><path d="M1.6 1.2 L4.6 3.8 L1.6 6.4 Z" fill="#111"/></svg>
<div class="a nw" style="left:18px;top:250.6px;width:28px;text-align:center;line-height:12px;color:#e81010;font-weight:bold;">1</div>
<div class="a nw t" style="left:50px;top:250.6px;line-height:12px;">09/01/2024</div>
<div class="a nw t" style="left:125px;top:250.6px;line-height:12px;transform:scaleX(0.955);transform-origin:0 0;">PBH00001-290...</div>
<div class="a nw t" style="left:260px;top:250.6px;line-height:12px;transform:scaleX(0.9);transform-origin:0 0;">Rạch giá</div>
<div class="a nw t" style="left:371px;top:250.6px;line-height:12px;transform:scaleX(0.915);transform-origin:0 0;">Lê Văn Kháng</div>
<div class="a nw t" style="left:492px;top:250.6px;line-height:12px;transform:scaleX(0.96);transform-origin:0 0;">Sơn Spring Ext 0104<br>(18l)</div>
<div class="a nw t" style="left:593px;top:250.6px;line-height:12px;transform:scaleX(0.98);transform-origin:0 0;">thùng</div>
<div class="a nw" style="left:625px;top:250.6px;width:50px;text-align:right;line-height:12px">5.</div>
<div class="a nw" style="left:678px;top:250.6px;width:54px;text-align:right;line-height:12px">1,650,000</div>
<div class="a nw" style="left:735px;top:250.6px;width:31px;text-align:right;line-height:12px">0.</div>
<div class="a nw" style="left:769px;top:250.6px;width:56px;text-align:right;line-height:12px">1,650,000.</div>
<div class="a nw" style="left:828px;top:250.6px;width:79px;text-align:right;line-height:12px">8,250,000</div>
<div class="a nw" style="left:910px;top:250.6px;width:61px;text-align:right;line-height:12px">27,775,000</div>
<div class="a nw" style="left:974px;top:250.6px;width:76px;text-align:right;line-height:12px">0</div>
<div class="a nw" style="left:1053px;top:250.6px;width:71px;text-align:right;line-height:12px">27,775,000</div>
<div class="a nw t" style="left:1130px;top:250.6px;line-height:12px;transform:scaleX(0.96);transform-origin:0 0;">KDH00001-290823_</div>
<div class="a nw" style="left:18px;top:277.6px;width:28px;text-align:center;line-height:12px;">2</div>
<div class="a nw t" style="left:492px;top:277.6px;line-height:12px;transform:scaleX(0.96);transform-origin:0 0;">Spring int 0216 (18l)</div>
<div class="a nw t" style="left:593px;top:277.6px;line-height:12px;transform:scaleX(0.98);transform-origin:0 0;">thùng</div>
<div class="a nw" style="left:625px;top:277.6px;width:50px;text-align:right;line-height:12px">25.</div>
<div class="a nw" style="left:678px;top:277.6px;width:54px;text-align:right;line-height:12px">781,000</div>
<div class="a nw" style="left:735px;top:277.6px;width:31px;text-align:right;line-height:12px">0.</div>
<div class="a nw" style="left:769px;top:277.6px;width:56px;text-align:right;line-height:12px">781,000.</div>
<div class="a nw" style="left:828px;top:277.6px;width:79px;text-align:right;line-height:12px">19,525,000</div>
<div class="a nw" style="left:18px;top:295.6px;width:28px;text-align:center;line-height:12px;">3</div>
<div class="a nw t" style="left:50px;top:295.6px;line-height:12px;">09/01/2024</div>
<div class="a nw t" style="left:125px;top:295.6px;line-height:12px;transform:scaleX(0.955);transform-origin:0 0;">PBH00002-290...</div>
<div class="a nw t" style="left:260px;top:295.6px;line-height:12px;transform:scaleX(0.9);transform-origin:0 0;">Rạch giá</div>
<div class="a nw t" style="left:371px;top:295.6px;line-height:12px;transform:scaleX(0.915);transform-origin:0 0;">Lâm Cửa Hàng</div>
<div class="a nw t" style="left:492px;top:295.6px;line-height:12px;transform:scaleX(0.96);transform-origin:0 0;">Spring int 0216 (18l)</div>
<div class="a nw t" style="left:593px;top:295.6px;line-height:12px;transform:scaleX(0.98);transform-origin:0 0;">thùng</div>
<div class="a nw" style="left:625px;top:295.6px;width:50px;text-align:right;line-height:12px">1.</div>
<div class="a nw" style="left:678px;top:295.6px;width:54px;text-align:right;line-height:12px">781,000</div>
<div class="a nw" style="left:735px;top:295.6px;width:31px;text-align:right;line-height:12px">0.</div>
<div class="a nw" style="left:769px;top:295.6px;width:56px;text-align:right;line-height:12px">781,000.</div>
<div class="a nw" style="left:828px;top:295.6px;width:79px;text-align:right;line-height:12px">781,000</div>
<div class="a nw" style="left:910px;top:295.6px;width:61px;text-align:right;line-height:12px">781,000</div>
<div class="a nw" style="left:974px;top:295.6px;width:76px;text-align:right;line-height:12px">0</div>
<div class="a nw" style="left:1053px;top:295.6px;width:71px;text-align:right;line-height:12px">781,000</div>
<div class="a nw" style="left:18px;top:313.6px;width:28px;text-align:center;line-height:12px;">4</div>
<div class="a nw t" style="left:50px;top:313.6px;line-height:12px;">09/01/2024</div>
<div class="a nw t" style="left:125px;top:313.6px;line-height:12px;transform:scaleX(0.955);transform-origin:0 0;">PBH00003-290...</div>
<div class="a nw t" style="left:260px;top:313.6px;line-height:12px;transform:scaleX(0.9);transform-origin:0 0;">Rạch giá</div>
<div class="a nw t" style="left:371px;top:313.6px;line-height:12px;transform:scaleX(0.915);transform-origin:0 0;">Lâm Cửa Hàng</div>
<div class="a nw t" style="left:492px;top:313.6px;line-height:12px;transform:scaleX(0.96);transform-origin:0 0;">Spring int 0216 (18l)</div>
<div class="a nw t" style="left:593px;top:313.6px;line-height:12px;transform:scaleX(0.98);transform-origin:0 0;">thùng</div>
<div class="a nw" style="left:625px;top:313.6px;width:50px;text-align:right;line-height:12px">2.</div>
<div class="a nw" style="left:678px;top:313.6px;width:54px;text-align:right;line-height:12px">781,000</div>
<div class="a nw" style="left:735px;top:313.6px;width:31px;text-align:right;line-height:12px">0.</div>
<div class="a nw" style="left:769px;top:313.6px;width:56px;text-align:right;line-height:12px">781,000.</div>
<div class="a nw" style="left:828px;top:313.6px;width:79px;text-align:right;line-height:12px">1,562,000</div>
<div class="a nw" style="left:910px;top:313.6px;width:61px;text-align:right;line-height:12px">1,562,000</div>
<div class="a nw" style="left:974px;top:313.6px;width:76px;text-align:right;line-height:12px">0</div>
<div class="a nw" style="left:1053px;top:313.6px;width:71px;text-align:right;line-height:12px">1,562,000</div>
<div class="a nw" style="left:18px;top:331.6px;width:28px;text-align:center;line-height:12px;">5</div>
<div class="a nw t" style="left:50px;top:331.6px;line-height:12px;">10/01/2024</div>
<div class="a nw t" style="left:125px;top:331.6px;line-height:12px;transform:scaleX(0.955);transform-origin:0 0;">PBH00001-100...</div>
<div class="a nw t" style="left:260px;top:331.6px;line-height:12px;transform:scaleX(0.9);transform-origin:0 0;">Rạch giá</div>
<div class="a nw t" style="left:371px;top:331.6px;line-height:12px;transform:scaleX(0.915);transform-origin:0 0;">Nguyễn Văn Tam</div>
<div class="a nw t" style="left:492px;top:331.6px;line-height:12px;transform:scaleX(0.96);transform-origin:0 0;">Sắt 8</div>
<div class="a nw t" style="left:593px;top:331.6px;line-height:12px;transform:scaleX(0.98);transform-origin:0 0;">Kg</div>
<div class="a nw" style="left:625px;top:331.6px;width:50px;text-align:right;line-height:12px">60.</div>
<div class="a nw" style="left:678px;top:331.6px;width:54px;text-align:right;line-height:12px">30,000</div>
<div class="a nw" style="left:735px;top:331.6px;width:31px;text-align:right;line-height:12px">0.</div>
<div class="a nw" style="left:769px;top:331.6px;width:56px;text-align:right;line-height:12px">30,000.</div>
<div class="a nw" style="left:828px;top:331.6px;width:79px;text-align:right;line-height:12px">1,800,000</div>
<div class="a nw" style="left:910px;top:331.6px;width:61px;text-align:right;line-height:12px">1,800,000</div>
<div class="a nw" style="left:974px;top:331.6px;width:76px;text-align:right;line-height:12px">800,000</div>
<div class="a nw" style="left:1053px;top:331.6px;width:71px;text-align:right;line-height:12px">1,000,000</div>
<div class="a nw" style="left:18px;top:349.6px;width:28px;text-align:center;line-height:12px;">6</div>
<div class="a nw t" style="left:50px;top:349.6px;line-height:12px;">10/01/2024</div>
<div class="a nw t" style="left:125px;top:349.6px;line-height:12px;transform:scaleX(0.955);transform-origin:0 0;">PBH00002-100...</div>
<div class="a nw t" style="left:260px;top:349.6px;line-height:12px;transform:scaleX(0.9);transform-origin:0 0;">Rạch sỏi</div>
<div class="a nw t" style="left:371px;top:349.6px;line-height:12px;transform:scaleX(0.915);transform-origin:0 0;">Võ Minh Trí</div>
<div class="a nw t" style="left:492px;top:349.6px;line-height:12px;transform:scaleX(0.96);transform-origin:0 0;">Sắt 8</div>
<div class="a nw t" style="left:593px;top:349.6px;line-height:12px;transform:scaleX(0.98);transform-origin:0 0;">Kg</div>
<div class="a nw" style="left:625px;top:349.6px;width:50px;text-align:right;line-height:12px">15.</div>
<div class="a nw" style="left:678px;top:349.6px;width:54px;text-align:right;line-height:12px">28,000</div>
<div class="a nw" style="left:735px;top:349.6px;width:31px;text-align:right;line-height:12px">0.</div>
<div class="a nw" style="left:769px;top:349.6px;width:56px;text-align:right;line-height:12px">28,000.</div>
<div class="a nw" style="left:828px;top:349.6px;width:79px;text-align:right;line-height:12px">420,000</div>
<div class="a nw" style="left:910px;top:349.6px;width:61px;text-align:right;line-height:12px">420,000</div>
<div class="a nw" style="left:974px;top:349.6px;width:76px;text-align:right;line-height:12px">220,000</div>
<div class="a nw" style="left:1053px;top:349.6px;width:71px;text-align:right;line-height:12px">200,000</div>
<div class="tot" style="left:828px;width:81.5px">32,338,000</div>
<div class="tot" style="left:911.5px;width:61.700000000000045px">32,338,000</div>
<div class="tot" style="left:975px;width:76.70000000000005px">1,020,000</div>
<div class="tot" style="left:1054px;width:72px">31,318,000</div>
<div class="a" style="left:2px;top:735.8px;width:1314px;height:1px;background:repeating-linear-gradient(90deg,#b2b2b2 0,#b2b2b2 2.4px,transparent 2.4px,transparent 4px)"></div>
<div class="hl" style="left:3px;top:737.8px;width:1316px;background:#cdcdcd"></div>
<div class="dth" style="left:1px;top:739.5px;width:1318px;background:repeating-linear-gradient(90deg,#c6c6c6 0,#c6c6c6 2px,transparent 2px,transparent 4px)"></div>
<div class="sb" style="left:6.5px;letter-spacing:-0.03px">Chào mừng: Administrator đến với phần mềm MekongSoft</div>
<div class="a" style="left:240px;top:746.5px;width:1px;height:6.5px;background:#c4c4c4"></div>
<div class="sb" style="left:250px">Version: 4.0.0</div>
<div class="a" style="left:311px;top:746.5px;width:1px;height:6.5px;background:#c4c4c4"></div>
<div class="sb" style="left:320.5px;color:#f01010;letter-spacing:0.19px">Ngày: 11/01/2024 9:20:45 SA</div>
<div class="dtv" style="left:1108px;top:741px;height:16px"></div>
<div class="sb" style="right:7px">@2023 MekongSoft. Thông tin hỗ trợ: 0901 000 508</div>
</body></html>
